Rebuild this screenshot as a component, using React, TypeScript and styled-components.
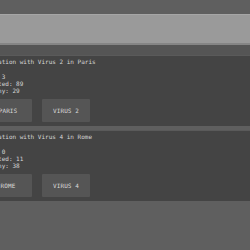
import styled, { createGlobalStyle } from 'styled-components';

const Global = createGlobalStyle`
  html, body {
    margin: 0;
    padding: 0;
    background: #5f5f5f;
    overflow: hidden;
  }
`

const Page = styled.div`
  width: 250px;
  height: 250px;
  padding-top: 14px;
  box-sizing: border-box;
  background: #5f5f5f;
  overflow: hidden;
  font-family: "DejaVu Sans Mono", "Liberation Mono", monospace;
`

const Header = styled.div`
  height: 28px;
  background: #9a9a9a;
  border-top: 1px solid #a6a6a6;
  border-bottom: 2px solid #858585;
`

const List = styled.div`
  display: flex;
  flex-direction: column;
  gap: 4px;
  padding-top: 10px;
  background: linear-gradient(#555555 0 10px, transparent 10px);
`

const Card = styled.div`
  background: #444444;
  border-top: 1px solid #5a5a5a;
  padding: 2px 0 4px;
  margin-left: -20px;
  color: #d6d6d6;
  font-size: 6px;
  line-height: 7px;
`

const Title = styled.div`
  white-space: nowrap;
`

const Stats = styled.div`
  margin-top: 8px;
  white-space: pre;
`

const Actions = styled.div`
  display: flex;
  gap: 10px;
  margin-top: 5px;
  padding-left: 4px;
`

const ActionButton = styled.button`
  min-width: 48px;
  height: 23px;
  padding: 0 11px;
  border: none;
  border-radius: 1px;
  background: #555555;
  color: #dadada;
  font-family: inherit;
  font-size: 6px;
  letter-spacing: 0.1px;
`

const sims = [
  { virus: 2, city: 'Paris', dead: 3, infected: 89, healthy: 29 },
  { virus: 4, city: 'Rome', dead: 0, infected: 11, healthy: 38 },
];

const App = () => {
    return (
        <Page>
            <Global />
            <Header />
            <List>
                {sims.map((s) => (
                    <Card key={s.virus}>
                        <Title>Simulation with Virus {s.virus} in {s.city}</Title>
                        <Stats>
                            {`Dead: ${s.dead}\nInfected: ${s.infected}\nHealthy: ${s.healthy}`}
                        </Stats>
                        <Actions>
                            <ActionButton>{s.city.toUpperCase()}</ActionButton>
                            <ActionButton>VIRUS {s.virus}</ActionButton>
                        </Actions>
                    </Card>
                ))}
            </List>
        </Page>
    )
}

export default App
